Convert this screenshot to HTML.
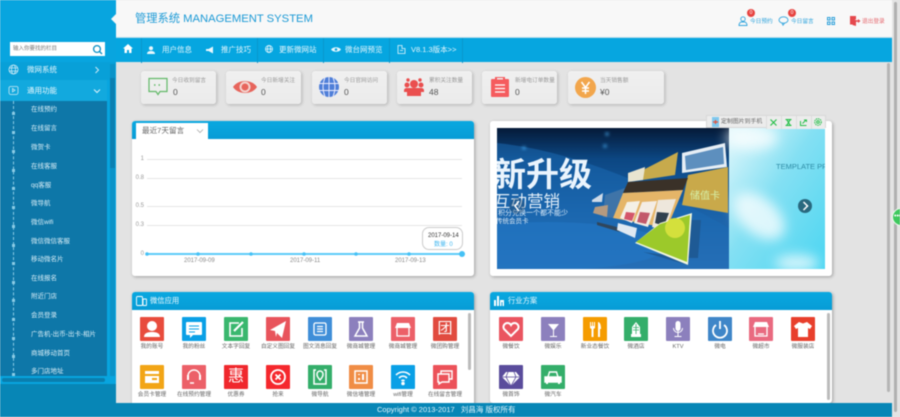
<!DOCTYPE html>
<html><head><meta charset="utf-8">
<style>
*{box-sizing:border-box}
html,body{margin:0;padding:0;width:900px;height:417px;overflow:hidden;background:#e3e3e3;font-family:"Liberation Sans","Noto Sans CJK SC",sans-serif}
#r{position:relative;width:900px;height:417px;overflow:hidden;filter:blur(.45px)}
#r div,#r span,#r svg{position:absolute}
.n{top:38px;height:25px;line-height:24px;color:#e8f7fd;font-size:7.5px;white-space:nowrap}
.sep{top:38px;height:25px;width:1px;background:#0a96cc}
.m{left:31px;color:#d9eef7;font-size:6.5px;line-height:10px;white-space:nowrap}
.d{left:12px;width:3px;height:3px;background:#8bcbe5}
.c{top:71px;width:75px;height:33px;background:linear-gradient(#f0f0f0,#ebebeb);border-radius:3px;box-shadow:1px 1px 3px rgba(0,0,0,.22)}
.l{top:6px;font-size:5.7px;color:#999;white-space:nowrap;line-height:9px}
.v{top:15px;font-size:8.5px;color:#555;line-height:12px;white-space:nowrap}
.p{background:#fff;border-radius:3px;box-shadow:1px 1px 3px rgba(0,0,0,.3)}
.h{background:linear-gradient(#0aa8e0,#079cd6);border-radius:3px 3px 0 0;left:0;top:0}
.t{width:24px;height:24px;border-radius:1px}
.b{width:42px;text-align:center;font-size:5.7px;color:#666;line-height:9px;white-space:nowrap}
.yl{font-size:6px;color:#999;left:0;width:12px;text-align:right;line-height:8px}
.xl{font-size:6px;color:#888;line-height:8px;white-space:nowrap}
.g{left:15px;width:315px;height:1px;background:#e6e6e6}
.tb{top:0;height:13px;background:#ececec;border-left:1px solid #ddd}
</style></head><body><div id="r">

<!-- sidebar -->
<div style="left:0;top:0;width:116px;height:417px;background:#08a5df"></div>
<div style="left:0;top:62px;width:116px;height:18px;background:#08a0d8"></div>
<div style="left:0;top:80px;width:107px;height:21px;background:#12a9de"></div>
<div style="left:0;top:101px;width:107px;height:275px;background:#0e77a8"></div>
<div style="left:110px;top:64px;width:5px;height:312px;background:#0b93c8"></div>
<div style="left:110px;top:78px;width:5px;height:90px;background:#0b80b2"></div>
<div style="left:2px;top:378px;width:103px;height:4px;border-radius:2px;background:#0a7eae"></div>
<div style="left:0;top:384px;width:116px;height:33px;background:#0786b6"></div>
<div style="left:10px;top:42px;width:95px;height:14px;background:#fff"></div>
<div style="left:13px;top:44px;font-size:5.5px;line-height:10px;color:#777;white-space:nowrap">输入你要找的栏目</div>
<svg style="left:92px;top:44px" width="11" height="11" viewBox="0 0 11 11" fill="none" stroke="#0a8fc4" stroke-width="1.3"><circle cx="5" cy="5" r="3.4"/><path d="M7.5 7.5L10 10"/></svg>
<svg style="left:8px;top:64px" width="11" height="11" viewBox="0 0 11 11" fill="none" stroke="#cdeaf6" stroke-width=".8"><circle cx="5.5" cy="5.5" r="4.5"/><ellipse cx="5.5" cy="5.5" rx="2" ry="4.5"/><path d="M1 4h9M1 7h9"/></svg>
<div style="left:27px;top:64px;font-size:7.5px;line-height:11px;color:#e4f5fc">微网系统</div>
<svg style="left:94px;top:66px" width="6" height="8" viewBox="0 0 6 8" fill="none" stroke="#cdeaf6"><path d="M1.5 1l3 3-3 3"/></svg>
<svg style="left:8px;top:85px" width="11" height="11" viewBox="0 0 11 11" fill="none" stroke="#cdeaf6" stroke-width=".8"><path d="M2 1.5h7a1.5 1.5 0 0 1 1 1v5a2 2 0 0 1-2 2H3a2 2 0 0 1-2-2v-5z"/><path d="M4.5 3.5l2.5 1.700-2.5 1.700z"/></svg>
<div style="left:27px;top:85px;font-size:7.5px;line-height:11px;color:#f0fafe">通用功能</div>
<svg style="left:93px;top:88px" width="8" height="6" viewBox="0 0 8 6" fill="none" stroke="#dff3fb"><path d="M1 1.5l3 3 3-3"/></svg>
<div style="left:13px;top:101px;width:0;height:275px;border-left:1px dashed #8bcbe5"></div>
<div class="d" style="top:112px"></div><div class="m" style="top:105px">在线预约</div>
<div class="d" style="top:131px"></div><div class="m" style="top:124px">在线留言</div>
<div class="d" style="top:150px"></div><div class="m" style="top:143px">微贺卡</div>
<div class="d" style="top:169px"></div><div class="m" style="top:162px">在线客服</div>
<div class="d" style="top:187px"></div><div class="m" style="top:181px">qq客服</div>
<div class="d" style="top:206px"></div><div class="m" style="top:199px">微导航</div>
<div class="d" style="top:225px"></div><div class="m" style="top:218px">微信wifi</div>
<div class="d" style="top:244px"></div><div class="m" style="top:237px">微信微信客服</div>
<div class="d" style="top:262px"></div><div class="m" style="top:255px">移动微名片</div>
<div class="d" style="top:281px"></div><div class="m" style="top:274px">在线报名</div>
<div class="d" style="top:299px"></div><div class="m" style="top:292px">附近门店</div>
<div class="d" style="top:318px"></div><div class="m" style="top:311px">会员登录</div>
<div class="d" style="top:337px"></div><div class="m" style="top:330px">广告机-出币-出卡-相片</div>
<div class="d" style="top:355px"></div><div class="m" style="top:349px">商城移动首页</div>
<div class="d" style="top:373px"></div><div class="m" style="top:367px">多门店地址</div>

<!-- header -->
<div style="left:116px;top:0;width:776px;height:38px;background:#f8f8f8;border-bottom:1px solid #b5dbea"></div>
<div style="left:111px;top:14px;width:0;height:0;border:5px solid transparent;border-left:0;border-right:5px solid #f8f8f8"></div>
<div style="left:135px;top:12px;font-size:11.25px;line-height:14px;color:#1c9ad6;white-space:nowrap">管理系统 MANAGEMENT SYSTEM</div>

<svg style="left:738px;top:16px" width="10" height="10" viewBox="0 0 10 10" fill="none" stroke="#34a6de" stroke-width=".9"><circle cx="5" cy="3" r="2.2"/><path d="M1 9.5c0-2.5 1.5-3.5 2.5-3.5h3c1 0 2.5 1 2.500 3.5z"/></svg>
<div style="left:747px;top:9px;width:8px;height:8px;border-radius:50%;background:#e74340;color:#fff;font-size:5px;line-height:8px;text-align:center">0</div>
<div style="left:750px;top:18px;font-size:5.700px;line-height:9px;color:#2ea3dc;white-space:nowrap">今日预约</div>
<svg style="left:778px;top:16px" width="11" height="10" viewBox="0 0 11 10" fill="none" stroke="#34a6de" stroke-width=".9"><ellipse cx="5.5" cy="4" rx="4.500" ry="3.200"/><path d="M4 7.200l1 2 1.500-2"/></svg>
<div style="left:788px;top:9px;width:8px;height:8px;border-radius:50%;background:#e74340;color:#fff;font-size:5px;line-height:8px;text-align:center">0</div>
<div style="left:791px;top:18px;font-size:5.700px;line-height:9px;color:#2ea3dc;white-space:nowrap">今日留言</div>
<svg style="left:827px;top:17px" width="8" height="8" viewBox="0 0 8 8" fill="#2c9fd9"><path d="M0 0h3.500v3.500H0zM4.500 0H8v3.500H4.500zM0 4.500h3.500V8H0zM4.500 4.500H8V8H4.500z"/><path fill="#f8f8f8" d="M1 1h1.500v1.500H1zM5.500 1H7v1.500H5.500zM1 5.500h1.500V7H1zM5.500 5.500H7V7H5.500z"/></svg>
<svg style="left:850px;top:16px" width="11" height="10" viewBox="0 0 11 10" fill="#e5484d"><path d="M0 0h6v3.500H5V4h1v6L2.500 9V8.500L0 8.500z"/><path d="M5 4.300h3V3l2.500 2L8 7V5.700H5z"/></svg>
<div style="left:862px;top:18px;font-size:5.700px;line-height:9px;color:#e56a70;white-space:nowrap">退出登录</div>

<!-- nav -->
<div style="left:116px;top:38px;width:776px;height:24px;background:#06a6e0"></div>
<svg style="left:123px;top:44px" width="10" height="9" viewBox="0 0 10 9" fill="#fff"><path d="M5 0L0 4.500h1.500V9h2.500V6h2v3h2.500V4.500H10z"/></svg>
<div class="sep" style="left:141px"></div>
<svg style="left:147px;top:46px" width="8" height="8" viewBox="0 0 8 8" fill="#e8f7fd"><circle cx="4" cy="2.200" r="2"/><path d="M0 8c0-2.500 2-3 4-3s4 .5 4 3z"/></svg>
<div class="n" style="left:162px">用户信息</div>
<svg style="left:206px;top:46px" width="8" height="8" viewBox="0 0 8 8" fill="#e8f7fd"><path d="M0 3h2.500L7 .5v7L2.500 5H0z"/></svg>
<div class="n" style="left:221px">推广技巧</div>
<div class="sep" style="left:257px"></div>
<svg style="left:265px;top:45px" width="8" height="8" viewBox="0 0 8 8" fill="none" stroke="#e8f7fd" stroke-width=".8"><circle cx="4" cy="4" r="3.500"/><ellipse cx="4" cy="4" rx="1.500" ry="3.500"/><path d="M.5 4h7"/></svg>
<div class="n" style="left:279px">更新微网站</div>
<div class="sep" style="left:323px"></div>
<svg style="left:331px;top:46px" width="10" height="7" viewBox="0 0 10 7" fill="#e8f7fd"><path d="M0 3.500C2 .5 8 .5 10 3.500 8 6.500 2 6.500 0 3.500z"/><circle cx="5" cy="3.500" r="1.300" fill="#06a6e0"/></svg>
<div class="n" style="left:345px">微台网预览</div>
<div class="sep" style="left:389px"></div>
<svg style="left:397px;top:45px" width="9" height="9" viewBox="0 0 9 9" fill="none" stroke="#e8f7fd" stroke-width=".8"><path d="M1 .5h4v3H8v5H1z"/><path d="M3 5.500h3"/></svg>
<div class="n" style="left:411px">V8.1.3版本&gt;&gt;</div>
<div class="sep" style="left:462px"></div>

<!-- scrollbars -->
<div style="left:887px;top:63px;width:3px;height:329px;background:#b5b5b5;border-radius:2px"></div>
<div style="left:894px;top:2px;width:3px;height:410px;background:#b0b0b0;border-radius:2px"></div>

<!-- stat cards -->
<div class="c" style="left:141px">
<svg style="left:7px;top:6px" width="20" height="20" viewBox="0 0 20 20" fill="none" stroke="#62b968" stroke-width="1.200"><path d="M1 1.500h18v13h-7l-2 3-2-3H1z"/><path stroke-width="1.500" stroke-dasharray="1.500 3" d="M6 8h9"/></svg>
<div class="l" style="left:31px">今日收到留言</div><div class="v" style="left:32px">0</div></div>
<div class="c" style="left:226px">
<svg style="left:7px;top:8px" width="24" height="16" viewBox="0 0 24 16"><path fill="#e7655c" d="M0 8C5 0 19 0 24 8 19 16 5 16 0 8z"/><circle cx="12" cy="8" r="5.500" fill="#f3d4cf"/><circle cx="12" cy="8" r="3.500" fill="#e7655c"/></svg>
<div class="l" style="left:35px">今日新增关注</div><div class="v" style="left:35px">0</div></div>
<div class="c" style="left:312px">
<svg style="left:7px;top:6px" width="20" height="20" viewBox="0 0 20 20"><circle cx="10" cy="10" r="10" fill="#4f7fd8"/><path fill="none" stroke="#eef" stroke-width=".9" d="M0 6.500h20M0 13.500h20M10 0v20M6 .5c-2.500 6-2.500 13 0 19M14 .5c2.500 6 2.500 13 0 19"/></svg>
<div class="l" style="left:32px">今日官网访问</div><div class="v" style="left:32px">0</div></div>
<div class="c" style="left:397px">
<svg style="left:7px;top:7px" width="20" height="19" viewBox="0 0 20 19" fill="#ea4f4f"><circle cx="10" cy="6" r="4"/><circle cx="3" cy="7" r="2.500"/><circle cx="17" cy="7" r="2.500"/><circle cx="4" cy="2" r="1.700"/><circle cx="16" cy="2" r="1.700"/><path d="M3 18v-4c0-2.500 2-3.500 3.500-3.500h7c1.500 0 3.500 1 3.500 3.500v4z"/><path d="M0 12.500c0-1.500 1-2.500 3-2.500h14c2 0 3 1 3 2.500V14H0z"/></svg>
<div class="l" style="left:32px">累积关注数量</div><div class="v" style="left:32px">48</div></div>
<div class="c" style="left:482px">
<svg style="left:9px;top:6px" width="18" height="20" viewBox="0 0 18 20"><path fill="#f55b5e" d="M1 2h16a1 1 0 0 1 1 1v16a1 1 0 0 1-1 1H1a1 1 0 0 1-1-1V3a1 1 0 0 1 1-1z"/><path fill="#f55b5e" d="M4 0h10v4H4z"/><path stroke="#fff" stroke-width="1.200" d="M4 8h10M4 11.500h10M4 15h10"/><path fill="#efefef" d="M6 1h6v1.500H6z"/></svg>
<div class="l" style="left:33px">新增电订单数量</div><div class="v" style="left:33px">0</div></div>
<div class="c" style="left:568px;width:96px">
<svg style="left:7px;top:6px" width="21" height="21" viewBox="0 0 21 21"><circle cx="10.500" cy="10.500" r="10.500" fill="#f2a64c"/><path fill="none" stroke="#fff" stroke-width="1.500" d="M6.500 5l4 5.500 4-5.500M10.500 10.500V17M7 11h7M7 14h7"/></svg>
<div class="l" style="left:32px">当天销售额</div><div class="v" style="left:32px">¥0</div></div>

<!-- chart panel -->
<div class="p" style="left:132px;top:121px;width:342px;height:155px">
<div class="h" style="width:342px;height:18px"></div>
<div style="left:4px;top:2px;width:72px;height:17px;background:#fff"></div>
<div style="left:10px;top:4px;font-size:7.6px;line-height:12px;color:#666;white-space:nowrap">最近7天留言</div>
<svg style="left:64px;top:8px" width="8" height="5" viewBox="0 0 8 5" fill="none" stroke="#aaa" stroke-width=".8"><path d="M1 .5l3 3 3-3"/></svg>
<div class="yl" style="top:34px">1</div><div class="g" style="top:38px"></div>
<div class="yl" style="top:53px">0.8</div><div class="g" style="top:57px"></div>
<div class="yl" style="top:81px">0.5</div><div class="g" style="top:85px"></div>
<div class="yl" style="top:100px">0.3</div><div class="g" style="top:104px"></div>
<div class="yl" style="top:129px">0</div>
<svg style="left:0;top:0" width="342" height="155">
<path d="M15 133h315" stroke="#5ccbf8" stroke-width="2"/>
<g fill="#45c1f5"><circle cx="15" cy="133" r="1.800"/><circle cx="66" cy="133" r="1.800"/><circle cx="119" cy="133" r="1.800"/><circle cx="172" cy="133" r="1.800"/><circle cx="224" cy="133" r="1.800"/><circle cx="277" cy="133" r="1.800"/><circle cx="330" cy="133" r="3"/></g>
</svg>
<div class="xl" style="left:52px;top:136px">2017-09-09</div>
<div class="xl" style="left:158px;top:136px">2017-09-11</div>
<div class="xl" style="left:263px;top:136px">2017-09-13</div>
<div style="left:290px;top:106px;width:41px;height:23px;background:#fff;border:1px solid #ccc;border-radius:7px"></div>
<div class="xl" style="left:296px;top:111px;color:#333">2017-09-14</div>
<div class="xl" style="left:302px;top:120px;color:#45b8f0">数量: 0</div>
</div>

<!-- banner panel -->
<div class="p" style="left:490px;top:121px;width:342px;height:155px"></div>
<svg style="left:497px;top:128px" width="328" height="141" viewBox="0 0 328 141">
<defs>
<linearGradient id="a" x1="0" y1="0" x2="0" y2="1"><stop offset="0" stop-color="#051a38"/><stop offset=".22" stop-color="#0c4783"/><stop offset=".6" stop-color="#1a62a8"/><stop offset="1" stop-color="#2f72b8"/></linearGradient>
<linearGradient id="s" x1="0" y1="0" x2="1" y2="1"><stop offset="0" stop-color="#e4f8fc"/><stop offset=".45" stop-color="#84e0f3"/><stop offset="1" stop-color="#4cd6f2"/></linearGradient>
<filter id="f"><feGaussianBlur stdDeviation="6"/></filter>
<filter id="f2"><feGaussianBlur stdDeviation="1.500"/></filter>
</defs>
<rect width="232" height="141" fill="url(#a)"/>
<ellipse cx="50" cy="118" rx="120" ry="24" fill="#2a85d8" opacity=".55"/>
<path d="M0 15Q100 25 232 100V141H0z" fill="#1c6bb6" opacity=".5"/>
<g fill="#4db8ff" filter="url(#f2)"><circle cx="110" cy="6" r="1.500"/><circle cx="108" cy="18" r="1.500"/><circle cx="27" cy="20" r="1.500"/></g>
<rect x="232" width="96" height="141" fill="url(#s)"/>
<g fill="#fff" filter="url(#f)" opacity=".75"><ellipse cx="262" cy="88" rx="30" ry="18" transform="rotate(40 262 88)"/><ellipse cx="255" cy="10" rx="26" ry="12"/><ellipse cx="300" cy="135" rx="22" ry="8"/></g>
<text x="279" y="41" font-size="7.500" fill="#2f8ca6" font-family="Liberation Sans">TEMPLATE PR</text>
<text x="-4" y="58" font-size="33" font-weight="bold" fill="#eaf4fd" font-family="Liberation Sans,Noto Sans CJK SC">新升级</text>
<text x="-3" y="79" font-size="16.500" fill="#e4f0fa" font-family="Liberation Sans,Noto Sans CJK SC">互动营销</text>
<text x="1" y="87" font-size="7" fill="#dcebf8" font-family="Liberation Sans,Noto Sans CJK SC">积分兑换一个都不能少</text>
<text x="-1" y="95" font-size="6.500" fill="#dcebf8" font-family="Liberation Sans,Noto Sans CJK SC">传统会员卡</text>
<path d="M185 25l43-10 2 24-45 6z" fill="#e6eef5"/>
<path d="M188 28l38-9 1 17-38 6z" fill="#5d8fbe"/>
<path d="M146 42l35-18-3 23-33 5z" fill="#c7aa4c"/>
<path d="M131 45l17-6-2 13-15 2z" fill="#e8e4d0"/>
<path d="M191 47l40-8v46l-46-8z" fill="#c9a94a"/>
<text x="193" y="71" font-size="10" fill="#d6f0a8" font-family="Liberation Sans,Noto Sans CJK SC">储值卡</text>
<path d="M95 72l11-7-1 9H95z" fill="#cfdbe8"/>
<path d="M108 67l20-7-12 30-10-1z" fill="#3f74a8"/>
<path d="M98 79l13-2-1 12-14-4z" fill="#b59a80"/>
<path d="M131 54l60-4-5 12-60 3z" fill="#3a3128"/>
<path d="M126 65l60-3-16 38-54-10z" fill="#e5b568"/>
<path d="M130 74l13-1-8 22-12-5z" fill="#f4f0e6"/><path d="M145 74l15-1-9 26-14-4z" fill="#f4ede4"/><path d="M161 72l18-1-11 31-13-3z" fill="#eee7dc"/>
<path d="M129 84l9 1-3 8-8-2z" fill="#d4566a"/><path d="M143 84l10 1-4 11-9-2z" fill="#c2596a"/><path d="M160 84l12 1-5 13-9-3z" fill="#30404e"/>
<path d="M100 94l20 5 3 5-23-7z" fill="#30465c"/>
<path d="M121 95l19 5-2 10-18-8z" fill="#dfe9f2"/>
<path d="M191 92h13l-3 38h-10z" fill="#1e5a95"/>
<path d="M146 124l45 6v7z" fill="#1e5a95"/>
<path d="M138 115l25-20 32-10-4 52z" fill="#f1f6e0"/>
<path d="M139 114l24-18 30-9-3 47z" fill="#9cc92a"/>
<circle cx="178" cy="100" r="10" fill="#d4e03c"/>
<circle cx="20" cy="78" r="8" fill="#2b4a66" opacity=".35"/>
<path d="M22 73l-4 5 4 5" fill="none" stroke="#fff" stroke-width="1.500"/>
<circle cx="308" cy="78" r="7" fill="#29697f"/><path d="M306.500 74l4 4-4 4" fill="none" stroke="#fff" stroke-width="1.500"/>
</svg>
<div style="left:706px;top:115px;width:120px;height:13px;background:#ececec;border:1px solid #d8d8d8">
<svg style="left:5px;top:1px" width="7" height="10" viewBox="0 0 7 10"><rect width="7" height="10" fill="#7fc8ee"/><path d="M1 5h5M3.500 3v4" stroke="#e5533c" stroke-width="1.200"/></svg>
<div style="left:14px;top:2px;font-size:5.900px;line-height:9px;color:#666;white-space:nowrap">定制图片到手机</div>
<div class="tb" style="left:59px;width:15px"></div><div class="tb" style="left:74px;width:15px"></div><div class="tb" style="left:89px;width:15px"></div><div class="tb" style="left:104px;width:14px"></div>
<svg style="left:63px;top:3px" width="7" height="7" viewBox="0 0 7 7" fill="none" stroke="#27c04a" stroke-width="1.200"><path d="M.5.500l6 6M6.500.500l-6 6"/></svg>
<svg style="left:78px;top:3px" width="7" height="7" viewBox="0 0 7 7" fill="none" stroke="#27c04a" stroke-width="1.200"><path d="M.5.500h6M.5 6.500h6M2 1l1.500 2.500L5 1M2 6l1.500-2.500L5 6"/></svg>
<svg style="left:93px;top:3px" width="7" height="7" viewBox="0 0 7 7" fill="none" stroke="#27c04a" stroke-width="1"><path d="M.5 2v4.500h6M2.500 4.500L6 1M4 1h2.500v2"/></svg>
<svg style="left:107px;top:2px" width="8" height="8" viewBox="0 0 8 8" fill="none" stroke="#27c04a" stroke-width="1"><circle cx="4" cy="4" r="3.300" stroke-dasharray="1.500 .7"/><circle cx="4" cy="4" r="1.300"/></svg>
</div>

<!-- float -->
<div style="left:892px;top:208px;width:18px;height:18px;border-radius:50%;background:#3ec85e;border:1px solid #eefbf0"></div>
<div style="left:894px;top:213px;color:#fff;font-size:7px;line-height:8px">•••</div>

<!-- wechat panel -->
<div class="p" style="left:132px;top:292px;width:342px;height:125px">
<div class="h" style="width:342px;height:18px"></div>
<svg style="left:4px;top:4px" width="11" height="10" viewBox="0 0 11 10" fill="none" stroke="#fff" stroke-width=".9"><rect x=".5" y=".5" width="6" height="9" rx="1"/><rect x="7" y="3" width="3.500" height="6.500" rx=".5"/></svg>
<div style="left:18px;top:3px;font-size:7.300px;line-height:11px;color:#f2fbff;white-space:nowrap">微信应用</div>
<div style="left:336px;top:21px;width:3px;height:57px;background:#bbb;border-radius:2px"></div>
</div>

<!-- row 1 -->
<div class="t" style="left:140px;top:317px;background:#e84c3d"><svg width="24" height="24" viewBox="0 0 24 24" fill="#fff"><circle cx="12" cy="9" r="5"/><path d="M4 20c0-4 4-5 8-5s8 1 8 5z"/></svg></div>
<div class="t" style="left:182px;top:317px;background:#0aa0e6"><svg width="24" height="24" viewBox="0 0 24 24"><path fill="#fff" d="M5 5h14a1 1 0 0 1 1 1v11a1 1 0 0 1-1 1h-8l-3 3v-3H5a1 1 0 0 1-1-1V6a1 1 0 0 1 1-1z"/><path stroke="#0aa0e6" d="M7 9h10M7 12h10M7 15h6"/></svg></div>
<div class="t" style="left:224px;top:317px;background:#3ab76e"><svg width="24" height="24" viewBox="0 0 24 24" fill="none" stroke="#fff" stroke-width="1.600"><path d="M15 6H6v13h12v-8"/><path stroke-width="2.200" d="M10 14l9-9"/></svg></div>
<div class="t" style="left:266px;top:317px;background:#e8545c"><svg width="24" height="24" viewBox="0 0 24 24" fill="#fff"><path d="M4 13L20 4l-4 17-5-5-1 4-1-6z"/></svg></div>
<div class="t" style="left:308px;top:317px;background:#3f8ed8"><svg width="24" height="24" viewBox="0 0 24 24" fill="none" stroke="#fff" stroke-width="1.300"><rect x="6" y="6" width="12" height="12" rx="1.500"/><path d="M9 9.500h6M9 12h6M9 14.500h6"/></svg></div>
<div class="t" style="left:349px;top:317px;background:#8c80bd"><svg width="24" height="24" viewBox="0 0 24 24" fill="none" stroke="#fff" stroke-width="1.500"><path d="M9 5h6M10.500 5v6L6 19h12l-4.500-8V5"/></svg></div>
<div class="t" style="left:391px;top:317px;background:#ec6068"><svg width="24" height="24" viewBox="0 0 24 24"><path fill="#fff" d="M6 6h12l2 5H4z"/><path fill="none" stroke="#fff" stroke-width="1.300" d="M6 11v8h12v-8"/></svg></div>
<div class="t" style="left:433px;top:317px;background:#e14b3f;color:#fff;font-size:15px;line-height:24px;text-align:center">团</div>
<div class="b" style="left:131px;top:343px">我的账号</div><div class="b" style="left:173px;top:343px">我的粉丝</div><div class="b" style="left:215px;top:343px">文本字回复</div><div class="b" style="left:257px;top:343px">自定义图回复</div><div class="b" style="left:299px;top:343px">图文消息回复</div><div class="b" style="left:340px;top:343px">微商城管理</div><div class="b" style="left:382px;top:343px">微商城管理</div><div class="b" style="left:424px;top:343px">微团购管理</div>
<!-- row 2 -->
<div class="t" style="left:140px;top:365px;background:#f2a516"><svg width="24" height="24" viewBox="0 0 24 24"><rect x="5" y="6" width="14" height="12" fill="#fff"/><rect x="5" y="9" width="14" height="2" fill="#f2a516"/><rect x="12" y="13" width="5" height="2" fill="#f2a516"/></svg></div>
<div class="t" style="left:182px;top:365px;background:#ec6068"><svg width="24" height="24" viewBox="0 0 24 24" fill="none" stroke="#fff" stroke-width="1.400"><path d="M6 13V11a6 6 0 0 1 12 0v2M8 18h4"/><path d="M6 10v5M18 10v5" stroke-width="2"/></svg></div>
<div class="t" style="left:224px;top:365px;background:#f0282d;color:#fff;font-size:16px;line-height:24px;text-align:center">惠</div>
<div class="t" style="left:266px;top:365px;background:#f5282d"><svg width="24" height="24" viewBox="0 0 24 24" fill="none" stroke="#fff" stroke-width="1.800"><circle cx="12" cy="12" r="7"/><path d="M9.500 9.500l5 5M14.500 9.500l-5 5"/></svg></div>
<div class="t" style="left:308px;top:365px;background:#34ae6a"><svg width="24" height="24" viewBox="0 0 24 24" fill="none" stroke="#fff" stroke-width="1.500"><path d="M8 5H6v14h12V5h-2"/><path d="M12 15c-3-3.500-3-4.500-3-6a3 3 0 0 1 6 0c0 1.500 0 2.500-3 6z"/></svg></div>
<div class="t" style="left:349px;top:365px;background:#f08d45"><svg width="24" height="24" viewBox="0 0 24 24" fill="none" stroke="#fff" stroke-width="1.500"><rect x="6" y="6" width="12" height="12"/><path d="M14 9v6M10 9v1M10 13v2" stroke-width="2"/></svg></div>
<div class="t" style="left:391px;top:365px;background:#0aa0e6"><svg width="24" height="24" viewBox="0 0 24 24" fill="none" stroke="#fff" stroke-width="1.600"><path d="M5 10c4-4 10-4 14 0M8 13c2.500-2.500 5.500-2.500 8 0M10.500 16c1-1 2-1 3 0"/><circle cx="12" cy="18.500" r="1" fill="#fff"/></svg></div>
<div class="t" style="left:433px;top:365px;background:#ec5259"><svg width="24" height="24" viewBox="0 0 24 24" fill="none" stroke="#fff" stroke-width="1.400"><path d="M8 9V6h11v8h-3"/><path d="M5 9h11v8H9l-3 2v-2H5z"/></svg></div>
<div class="b" style="left:131px;top:391px">会员卡管理</div><div class="b" style="left:173px;top:391px">在线预约管理</div><div class="b" style="left:215px;top:391px">优惠券</div><div class="b" style="left:257px;top:391px">抢来</div><div class="b" style="left:299px;top:391px">微导航</div><div class="b" style="left:340px;top:391px">微信墙管理</div><div class="b" style="left:382px;top:391px">wifi管理</div><div class="b" style="left:424px;top:391px">在线留言管理</div>

<!-- industry panel -->
<div class="p" style="left:490px;top:292px;width:342px;height:111px">
<div class="h" style="width:342px;height:18px"></div>
<svg style="left:4px;top:4px" width="10" height="10" viewBox="0 0 10 10" fill="#fff"><path d="M0 4h2v6H0zM3 0h2v10H3zM6 4h4v6H8.500V6H7.500v4H6z"/></svg>
<div style="left:18px;top:3px;font-size:7.300px;line-height:11px;color:#f2fbff;white-space:nowrap">行业方案</div>
<div style="left:337px;top:21px;width:3px;height:87px;background:#bbb;border-radius:2px"></div>
</div>
<div class="t" style="left:499px;top:317px;background:#ea5560"><svg width="24" height="24" viewBox="0 0 24 24" fill="none" stroke="#fff" stroke-width="2"><path d="M12 19L5 12a4 4 0 0 1 7-4 4 4 0 0 1 7 4z"/></svg></div>
<div class="t" style="left:541px;top:317px;background:#8c80bd"><svg width="24" height="24" viewBox="0 0 24 24" fill="#fff"><path d="M7 7h11l-5 6v6h3v1H9v-1h3v-6z"/></svg></div>
<div class="t" style="left:583px;top:317px;background:#f59c00"><svg width="24" height="24" viewBox="0 0 24 24" fill="#fff"><path d="M7 5h1v4h1V5h1v4h1V5h1v6l-1.500 1v8h-2v-8L7 11zM15 5c2 0 3 3 3 7h-1v8h-2z"/></svg></div>
<div class="t" style="left:624px;top:317px;background:#34ae6a"><svg width="24" height="24" viewBox="0 0 24 24" fill="#fff"><path d="M7 20v-3h1v-7l4-5 4 5v7h1v3z"/><path stroke="#34ae6a" stroke-width=".8" d="M9 10.500h6M9 13h6M12 7v10"/></svg></div>
<div class="t" style="left:666px;top:317px;background:#8c80bd"><svg width="24" height="24" viewBox="0 0 24 24" fill="#fff"><rect x="9.500" y="4" width="5" height="10" rx="2.500"/><path d="M11.500 14h1v5h3v1h-7v-1h3z"/><path fill="none" stroke="#fff" d="M7.500 11a4.500 4.500 0 0 0 9 0"/></svg></div>
<div class="t" style="left:708px;top:317px;background:#3f86c8"><svg width="24" height="24" viewBox="0 0 24 24" fill="none" stroke="#fff" stroke-width="1.800"><path d="M8 8a7 7 0 1 0 8 0M12 4v8"/></svg></div>
<div class="t" style="left:749px;top:317px;background:#e96a80"><svg width="24" height="24" viewBox="0 0 24 24"><path fill="#fff" d="M6 5h12l2 5H4z"/><path fill="none" stroke="#fff" stroke-width="1.300" d="M6 10v9h12v-9M9 17h6"/></svg></div>
<div class="t" style="left:791px;top:317px;background:#e83f2c"><svg width="24" height="24" viewBox="0 0 24 24" fill="#fff"><path d="M8 5l4 1.500L16 5l5 4-2 3-2-1v9H7v-9l-2 1-2-3z"/></svg></div>
<div class="b" style="left:490px;top:343px">微餐饮</div><div class="b" style="left:532px;top:343px">微娱乐</div><div class="b" style="left:574px;top:343px">新业态餐饮</div><div class="b" style="left:615px;top:343px">微酒店</div><div class="b" style="left:657px;top:343px">KTV</div><div class="b" style="left:699px;top:343px">微电</div><div class="b" style="left:740px;top:343px">微超市</div><div class="b" style="left:782px;top:343px">微服装店</div>
<div class="t" style="left:499px;top:365px;background:#5a4c9c"><svg width="24" height="24" viewBox="0 0 24 24" fill="#fff"><path d="M7 7h10l4 5-9 9-9-9z"/><path stroke="#5a4c9c" stroke-width=".8" d="M3 12h18M9 7l-2 5 5 9 5-9-2-5"/></svg></div>
<div class="t" style="left:541px;top:365px;background:#34ae6a"><svg width="24" height="24" viewBox="0 0 24 24" fill="none" stroke="#fff" stroke-width="1.400"><path d="M7 12l1.500-5h7L17 12"/><path fill="#fff" d="M4 12h16v5H4z"/><path d="M6 17v2M18 17v2" stroke-width="2"/></svg></div>
<div class="b" style="left:490px;top:391px">微首饰</div><div class="b" style="left:532px;top:391px">微汽车</div>

<!-- footer -->
<div style="left:116px;top:403px;width:776px;height:14px;background:#0786b6"></div>
<div style="left:377px;top:405px;font-size:7.500px;line-height:10px;color:#e3f5fc;white-space:nowrap">Copyright © 2013-2017 &nbsp; 刘昌海 版权所有</div>

</div></body></html>
